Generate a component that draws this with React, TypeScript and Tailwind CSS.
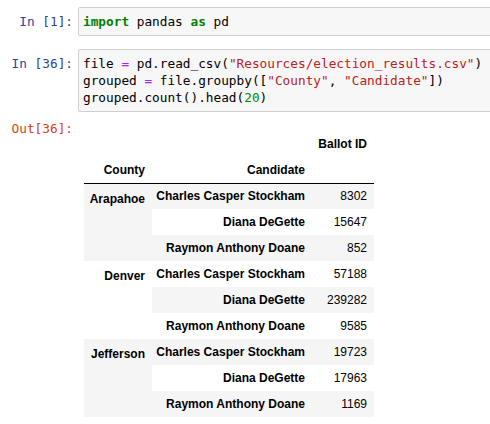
import React from 'react';

const mono = { fontFamily: '"DejaVu Sans Mono", monospace' };

type Row = { county?: string; span?: number; candidate: string; count: number };

const rows: Row[] = [
  { county: 'Arapahoe', span: 3, candidate: 'Charles Casper Stockham', count: 8302 },
  { candidate: 'Diana DeGette', count: 15647 },
  { candidate: 'Raymon Anthony Doane', count: 852 },
  { county: 'Denver', span: 3, candidate: 'Charles Casper Stockham', count: 57188 },
  { candidate: 'Diana DeGette', count: 239282 },
  { candidate: 'Raymon Anthony Doane', count: 9585 },
  { county: 'Jefferson', span: 3, candidate: 'Charles Casper Stockham', count: 19723 },
  { candidate: 'Diana DeGette', count: 17963 },
  { candidate: 'Raymon Anthony Doane', count: 1169 },
];

function Prompt({ children, out }: { children: React.ReactNode; out?: boolean }) {
  return (
    <div
      className={`w-[78px] shrink-0 pr-[5px] text-right text-[12.75px] leading-[17px] ${out ? 'text-[#D84315]' : 'text-[#303F9F]'}`}
      style={mono}
    >
      {children}
    </div>
  );
}

function CodeBox({ children }: { children: React.ReactNode }) {
  return (
    <div
      className="w-[430px] shrink-0 rounded-[2px] border border-[#cfcfcf] bg-[#f7f7f7] px-[4px] py-[5px] text-[12.75px] leading-[17px] whitespace-pre text-black"
      style={mono}
    >
      {children}
    </div>
  );
}

const Kw = ({ children }: { children: React.ReactNode }) => <span className="font-bold text-[#008000]">{children}</span>;
const Op = ({ children }: { children: React.ReactNode }) => <span className="text-[#AA22FF]">{children}</span>;
const Str = ({ children }: { children: React.ReactNode }) => <span className="text-[#BA2121]">{children}</span>;
const Num = ({ children }: { children: React.ReactNode }) => <span className="text-[#008800]">{children}</span>;

export default function App() {
  return (
    <div className="h-[424px] w-[490px] overflow-hidden bg-white pt-[7px]">
      {/* In [1] */}
      <div className="flex">
        <div className="pt-[6px]">
          <Prompt>In [1]:</Prompt>
        </div>
        <CodeBox>
          <Kw>import</Kw> pandas <Kw>as</Kw> pd
        </CodeBox>
      </div>

      {/* In [36] */}
      <div className="mt-[13px] flex">
        <div className="pt-[6px]">
          <Prompt>In [36]:</Prompt>
        </div>
        <CodeBox>
          {'file '}
          <Op>=</Op>
          {' pd.read_csv('}
          <Str>"Resources/election_results.csv"</Str>
          {')\ngrouped '}
          <Op>=</Op>
          {' file.groupby(['}
          <Str>"County"</Str>
          {', '}
          <Str>"Candidate"</Str>
          {'])\ngrouped.count().head('}
          <Num>20</Num>
          {')'}
        </CodeBox>
      </div>

      {/* Out [36] */}
      <div className="mt-[8px] flex">
        <Prompt out>Out[36]:</Prompt>
        <div className="pt-[11px] pl-[6px]">
          <table
            className="border-collapse text-[12px] text-black"
            style={{ fontFamily: '"Liberation Sans", Arial, sans-serif' }}
          >
            <thead>
              <tr className="h-[26px]">
                <th className="w-[68px]" />
                <th className="w-[160px]" />
                <th className="w-[62px] pr-[7px] text-right font-bold">Ballot ID</th>
              </tr>
              <tr className="h-[26px] border-b border-black">
                <th className="pr-[7px] text-right font-bold">County</th>
                <th className="pr-[7px] text-right font-bold">Candidate</th>
                <th />
              </tr>
            </thead>
            <tbody>
              {rows.map((r, i) => {
                const bg = i % 2 === 0 ? 'bg-[#f5f5f5]' : 'bg-white';
                return (
                  <tr key={i} className={`h-[26px] ${bg}`}>
                    {r.county ? (
                      <th rowSpan={r.span} className={`pr-[7px] text-right align-top pt-[6px] font-bold ${bg}`}>
                        {r.county}
                      </th>
                    ) : null}
                    <th className="pr-[7px] text-right font-bold">{r.candidate}</th>
                    <td className="pr-[7px] text-right">{r.count}</td>
                  </tr>
                );
              })}
            </tbody>
          </table>
        </div>
      </div>
    </div>
  );
}
